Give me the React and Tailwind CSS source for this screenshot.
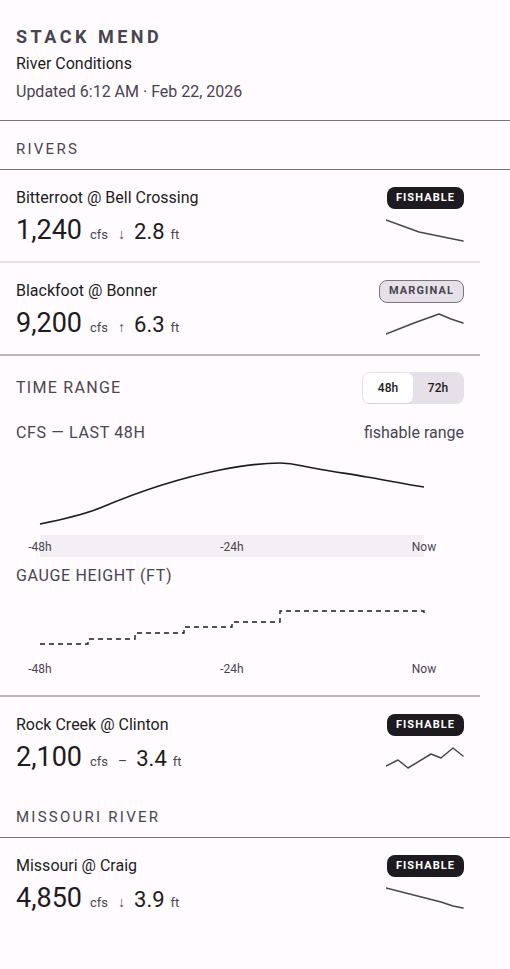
import React from "react";

function Badge({ kind }) {
  if (kind === "MARGINAL") {
    return (
      <div className="h-[23px] w-[85px] rounded-lg border border-[#79747e] bg-[#e6e0e9] flex items-center justify-center text-[11px] font-bold tracking-[0.1em] text-[#49454f]">
        MARGINAL
      </div>
    );
  }
  return (
    <div className="h-[22px] w-[77px] rounded-lg bg-[#1d1b20] flex items-center justify-center text-[11px] font-bold tracking-[0.1em] text-white">
      FISHABLE
    </div>
  );
}

function Spark({ points }) {
  return (
    <svg width="78" height="24" viewBox="0 0 78 24" className="block">
      <polyline points={points} fill="none" stroke="#49454f" strokeWidth="1.5" strokeLinejoin="round" strokeLinecap="round" />
    </svg>
  );
}

function RiverRow({ name, cfs, arrow, ft, badge, spark, gap, divider }) {
  return (
    <div className="w-[480px]">
      <div className="flex justify-between px-4 pt-[18px] pb-[15px]">
        <div className="flex flex-col">
          <div className="h-[20px] leading-[20px] text-[16px] text-[#1d1b20]">{name}</div>
          <div className="mt-[6px] h-[32px] flex items-baseline leading-[32px] text-[#1d1b20]">
            <span className="text-[27px]">{cfs}</span>
            <span className="ml-[8px] text-[13px] text-[#49454f]">cfs</span>
            <span className="ml-[10px] text-[14px] text-[#49454f]">{arrow}</span>
            <span className="ml-[9px] text-[22px]">{ft}</span>
            <span className="ml-[6px] text-[13px] text-[#49454f]">ft</span>
          </div>
        </div>
        <div className="flex flex-col items-end -mt-[1px]">
          <Badge kind={badge} />
          <div className={gap}>
            <Spark points={spark} />
          </div>
        </div>
      </div>
      {divider}
    </div>
  );
}

function SectionHeader({ title }) {
  return (
    <div className="border-b border-[#79747e] px-4 pt-[18px] pb-[10px]">
      <div className="h-[20px] leading-[20px] text-[15px] tracking-[0.15em] text-[#49454f]">{title}</div>
    </div>
  );
}

const axis = (y) => (
  <>
    <text x="40" y={y} textAnchor="middle" fontSize="12" fill="#49454f" fontFamily="Roboto">-48h</text>
    <text x="232" y={y} textAnchor="middle" fontSize="12" fill="#49454f" fontFamily="Roboto">-24h</text>
    <text x="424" y={y} textAnchor="middle" fontSize="12" fill="#49454f" fontFamily="Roboto">Now</text>
  </>
);

export default function App() {
  return (
    <div className="min-h-screen w-[510px] bg-[#fffbff] font-['Roboto',sans-serif]">
      {/* Header */}
      <div className="border-b border-[#79747e] px-4 pt-[25px] pb-[18px]">
        <div className="h-[24px] leading-[24px] text-[18px] font-bold tracking-[3.5px] text-[#49454f]">STACK MEND</div>
        <div className="mt-[5px] h-[20px] leading-[20px] text-[16px] text-[#1d1b20]">River Conditions</div>
        <div className="mt-[8px] h-[20px] leading-[20px] text-[16px] text-[#49454f]">Updated 6:12 AM · Feb 22, 2026</div>
      </div>

      <SectionHeader title="RIVERS" />

      <RiverRow
        name="Bitterroot @ Bell Crossing"
        cfs="1,240"
        arrow="↓"
        ft="2.8"
        badge="FISHABLE"
        gap="mt-[9px]"
        spark="0,2 33,14 77,23"
        divider={<div className="h-[2px] bg-[#e2dee5]" />}
      />
      <RiverRow
        name="Blackfoot @ Bonner"
        cfs="9,200"
        arrow="↑"
        ft="6.3"
        badge="MARGINAL"
        gap="mt-[8px]"
        spark="0,23 28,12 53,3 65,8 77,12"
        divider={<div className="h-[2px] bg-[#bcb7be]" />}
      />

      {/* Expanded detail */}
      <div className="w-[480px]">
        <div className="px-4 pt-[16px] flex items-center justify-between">
          <div className="text-[16px] tracking-[0.08em] text-[#49454f]">TIME RANGE</div>
          <div className="h-[32px] w-[102px] rounded-lg bg-[#e6e0e9] p-[1px] flex">
            <div className="h-[30px] w-[50px] rounded-md bg-white shadow-[0_1px_1px_rgba(0,0,0,0.06)] flex items-center justify-center text-[12px] font-medium text-[#1d1b20]">48h</div>
            <div className="h-[30px] flex-1 flex items-center justify-center text-[12px] font-medium text-[#1d1b20]">72h</div>
          </div>
        </div>
        <div className="mt-[19px] px-4 flex justify-between h-[20px] leading-[20px] text-[16px] text-[#49454f]">
          <span className="tracking-[0.04em]">CFS — LAST 48H</span>
          <span>fishable range</span>
        </div>
        <svg width="480" height="115" viewBox="0 0 480 115" className="block mt-[2px]">
          <rect x="40" y="90" width="384" height="22" fill="#f3eff4" />
          <path
            d="M40 79 C 60 75, 80 71, 100 63 C 140 46, 180 33, 220 25 C 245 20, 262 18, 280 18 C 295 18, 300 21, 313 23 C 335 27, 350 29, 367 32 C 390 36, 405 39, 424 42"
            fill="none"
            stroke="#1d1b20"
            strokeWidth="1.6"
          />
          {axis(106)}
        </svg>
        <div className="mt-[6px] px-4 h-[20px] leading-[20px] text-[16px] tracking-[0.04em] text-[#49454f]">GAUGE HEIGHT (FT)</div>
        <svg width="480" height="105" viewBox="0 0 480 105" className="block mt-[4px]">
          <path
            d="M40 54 H88 V49 H135 V43 H184 V37 H232 V32 H280 V21 H424 V26"
            fill="none"
            stroke="#1d1b20"
            strokeWidth="1.4"
            strokeDasharray="5 4"
          />
          {axis(83)}
        </svg>
        <div className="h-[2px] bg-[#bcb7be]" />
      </div>

      <RiverRow
        name="Rock Creek @ Clinton"
        cfs="2,100"
        arrow="–"
        ft="3.4"
        badge="FISHABLE"
        gap="mt-[9px]"
        spark="0,21 12,15 22,23 45,9 55,13 67,3 77,11"
        divider={<div className="h-[1px]" />}
      />

      <SectionHeader title="MISSOURI RIVER" />

      <RiverRow
        name="Missouri @ Craig"
        cfs="4,850"
        arrow="↓"
        ft="3.9"
        badge="FISHABLE"
        gap="mt-[9px]"
        spark="0,2 55,16 67,20 77,22"
        divider={null}
      />
    </div>
  );
}
